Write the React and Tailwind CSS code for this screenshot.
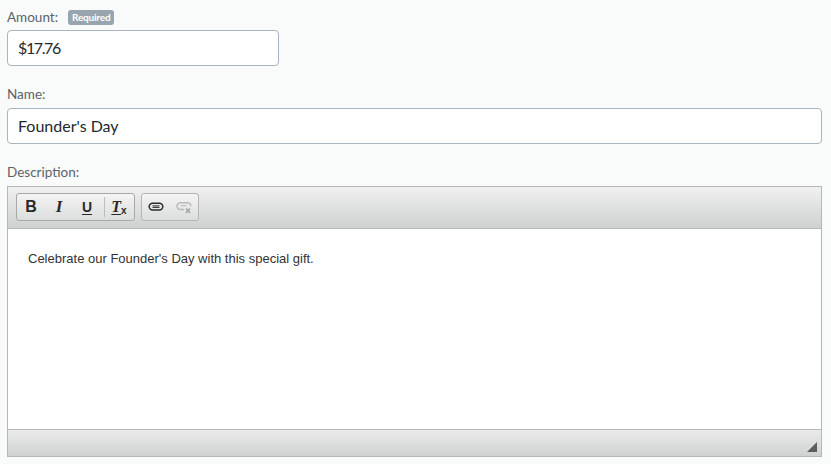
const LABEL = 'text-[13.5px] leading-[18px] text-[#5b6268]'
const INPUT = 'flex items-center h-9 rounded-[4px] border border-[#aab4bf] bg-white px-[10px] text-[16px] text-[#22282e]'

function LinkIcon() {
  return (
    <svg width="16" height="16" viewBox="0 0 16 16" fill="none">
      <rect x="1.2" y="4.2" width="13.6" height="6.8" rx="3.4" stroke="#2a2a2a" strokeWidth="1.5" />
      <path d="M4.5 6.9h7M4.5 8.4h7" stroke="#2a2a2a" strokeWidth="1" />
    </svg>
  )
}

function UnlinkIcon() {
  return (
    <svg width="16" height="16" viewBox="0 0 16 16" fill="none">
      <path d="M8 10.6H4.4a3.3 3.3 0 0 1 0-6.8h7.2a3.3 3.3 0 0 1 3.2 3.4" stroke="#b8baba" strokeWidth="1.5" />
      <path d="M4.5 6.7h6" stroke="#b8baba" strokeWidth="1" />
      <path d="M10 9.5l4 4.4M14 9.5l-4 4.4" stroke="#a5a7a7" strokeWidth="1.6" />
    </svg>
  )
}

function ToolBtn({ children }) {
  return (
    <span className="flex items-center justify-center h-[24px] w-[28px] text-[#2a2a2a]">
      {children}
    </span>
  )
}

export default function App() {
  return (
    <div className="h-[464px] w-[831px] overflow-hidden bg-[#f9fafa] pl-[7px] pr-[9px] pt-2 font-['Lato','Noto_Sans',sans-serif]">
      <div className="flex h-[18px] items-center">
        <span className={LABEL}>Amount:</span>
        <span className="ml-[10px] rounded-[3px] bg-[#98a4ae] px-[4px] text-[10px] font-bold leading-[15px] tracking-[-0.2px] text-white">Required</span>
      </div>
      <div className={`${INPUT} mt-[4px] w-[272px] tracking-[-1.4px]`}>$17.76</div>

      <div className={`${LABEL} mt-[19px]`}>Name:</div>
      <div className={`${INPUT} mt-[5px]`}>Founder's Day</div>

      <div className={`${LABEL} mt-[19px]`}>Description:</div>
      <div className="mt-[5px] border border-[#b6b8b8] bg-white">
        <div className="flex h-[42px] items-start gap-[6px] border-b border-[#b6b8b8] bg-gradient-to-b from-[#f0f0f0] to-[#cfd1d1] pl-2 pt-[6px]">
          <div className="flex h-[28px] items-center rounded-[3px] border border-[#a8aaaa] bg-gradient-to-b from-[#f4f4f4] to-[#dcdddd] pr-[1px]">
            <ToolBtn><span className="font-['Liberation_Sans',sans-serif] text-[16px] font-bold">B</span></ToolBtn>
            <ToolBtn><span className="font-['Liberation_Serif',serif] text-[17px] font-bold italic">I</span></ToolBtn>
            <ToolBtn><span className="font-['Liberation_Sans',sans-serif] text-[14px] font-bold underline underline-offset-2">U</span></ToolBtn>
            <span className="ml-[3px] h-[20px] w-px bg-[#bcbebe]" />
            <ToolBtn>
              <span className="font-['Liberation_Serif',serif] text-[16px] font-bold italic underline underline-offset-2">T</span>
              <span className="mt-[8px] font-['Liberation_Sans',sans-serif] text-[10px] font-bold leading-none">x</span>
            </ToolBtn>
          </div>
          <div className="flex h-[28px] items-center rounded-[3px] border border-[#b4b6b6] bg-gradient-to-b from-[#f4f4f4] to-[#dcdddd]">
            <ToolBtn><LinkIcon /></ToolBtn>
            <ToolBtn><UnlinkIcon /></ToolBtn>
          </div>
        </div>
        <div className="h-[200px] px-5 pt-[22px] font-['Liberation_Sans',sans-serif] text-[13px] leading-[16px] text-[#333333]">
          Celebrate our Founder's Day with this special gift.
        </div>
        <div className="flex h-[27px] items-end justify-end border-t border-[#b6b8b8] bg-gradient-to-b from-[#ebebeb] to-[#cfd1d1] pb-[4px] pr-[4px]">
          <svg width="10" height="10" viewBox="0 0 10 10"><path d="M10 0v10H0z" fill="#5c5e5e" /></svg>
        </div>
      </div>
    </div>
  )
}
